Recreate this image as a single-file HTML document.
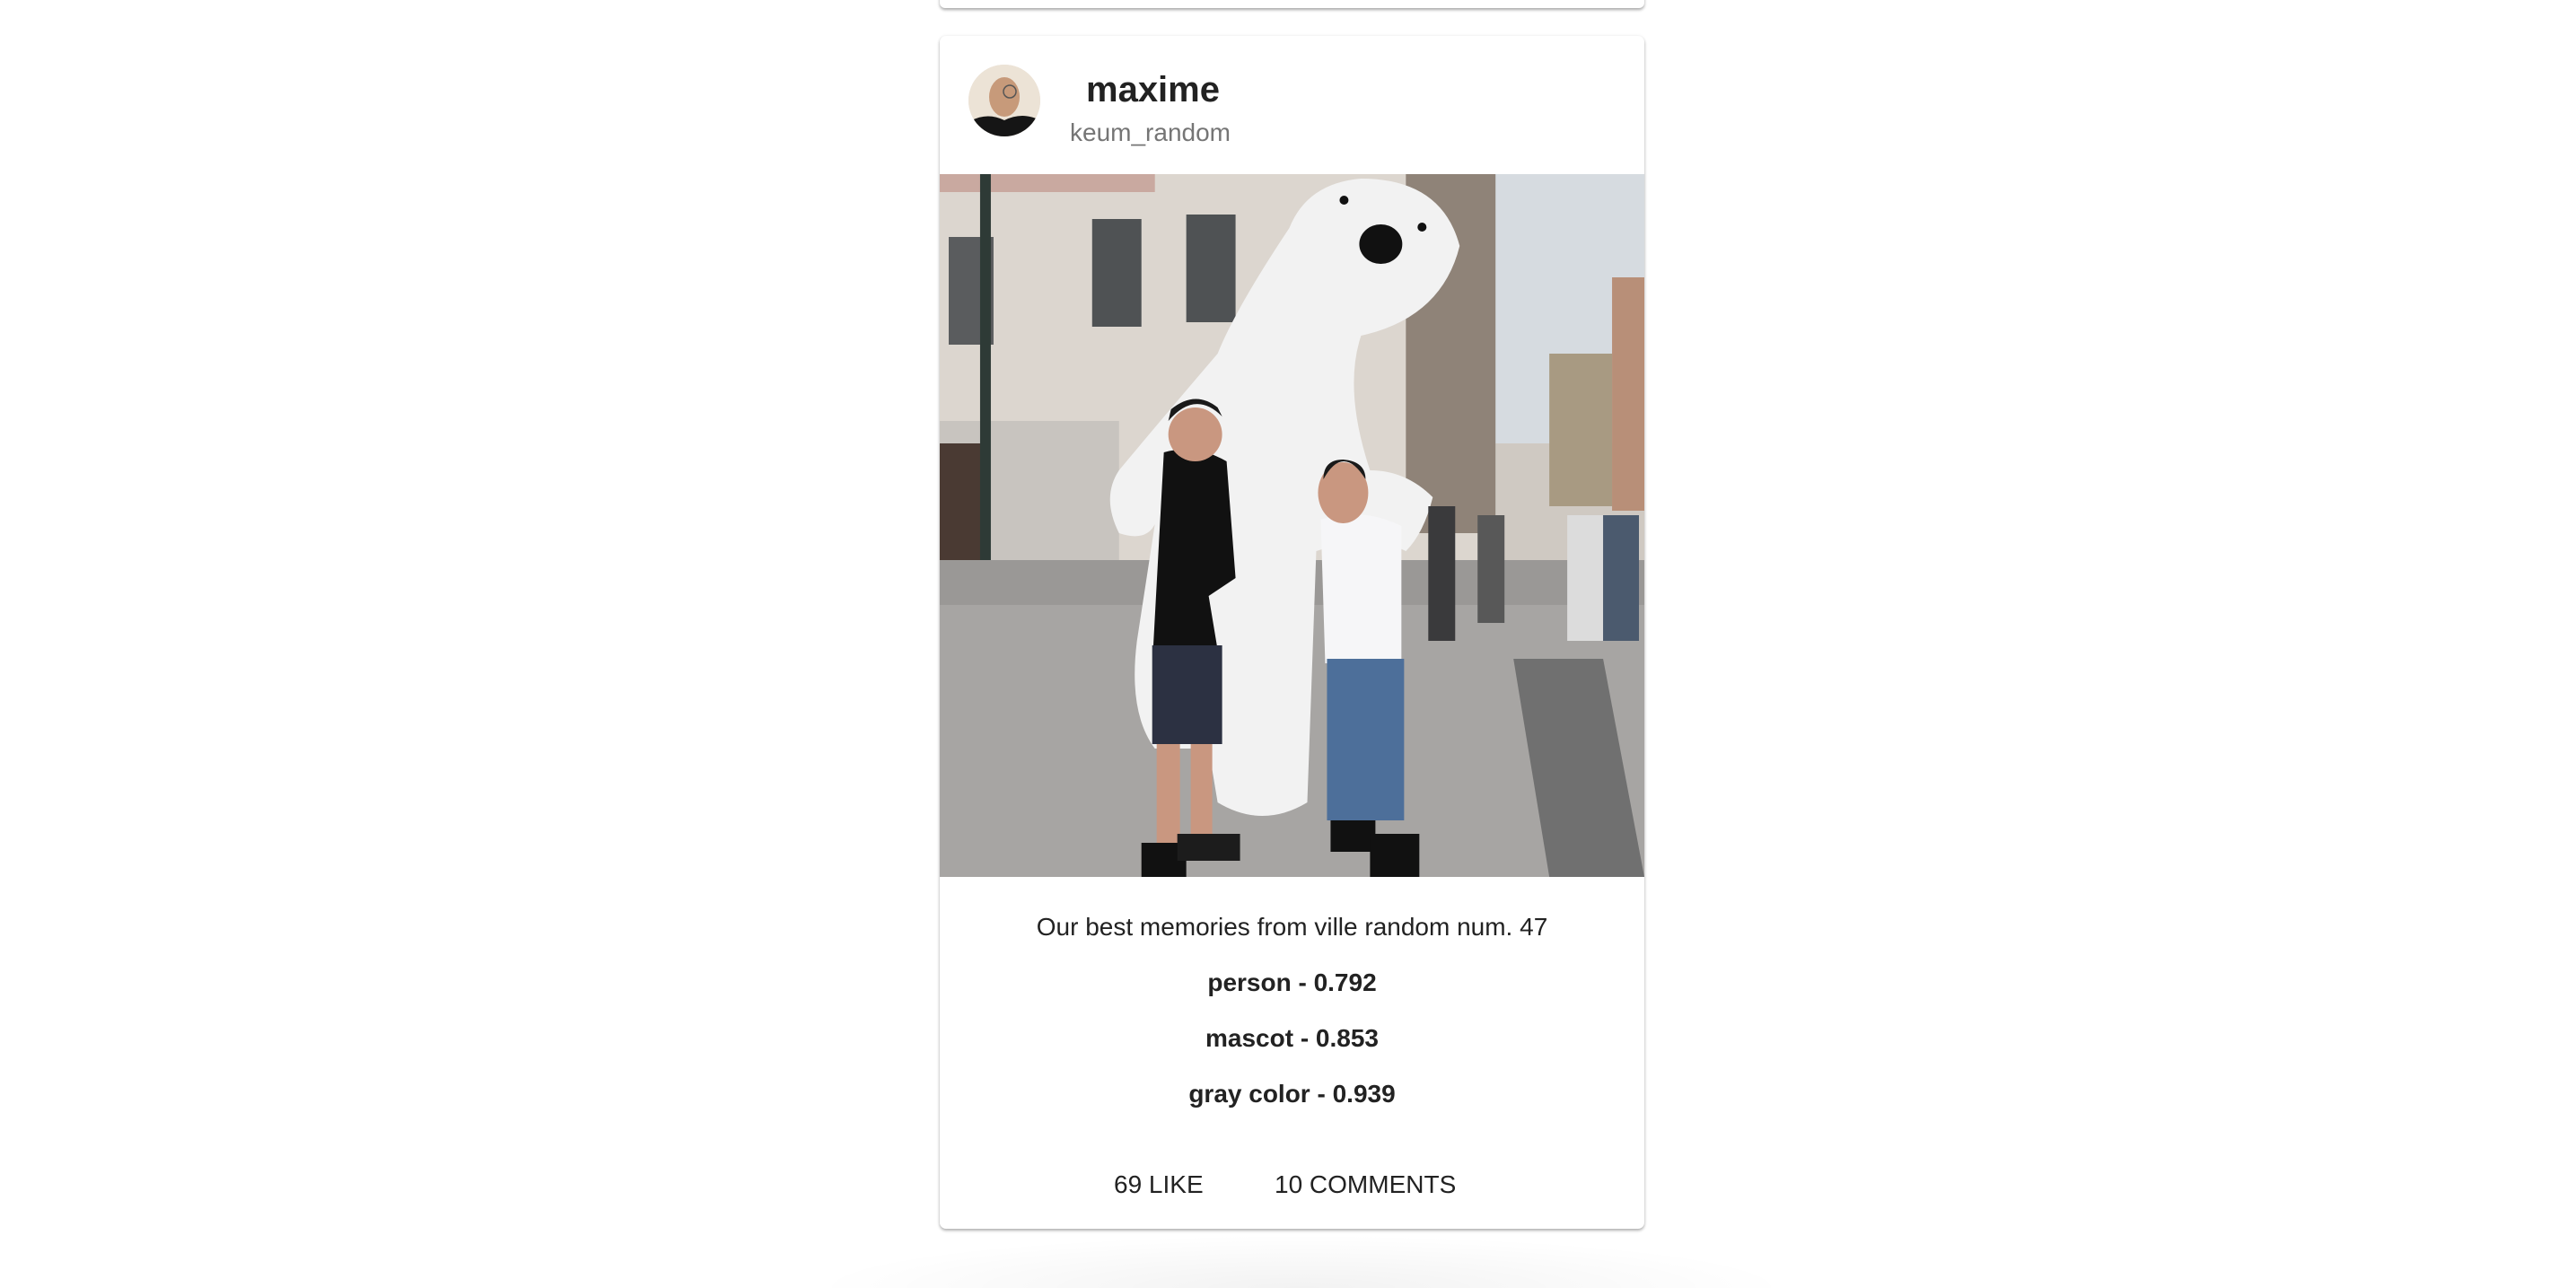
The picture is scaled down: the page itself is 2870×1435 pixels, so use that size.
<!DOCTYPE html>
<html><head><meta charset="utf-8"><style>
html,body{margin:0;padding:0;background:#fff;width:2870px;height:1410px;overflow:hidden;font-family:"Liberation Sans",Arial,sans-serif;color:#222}
.prev{position:absolute;left:1047px;top:-20px;width:785px;height:29px;background:#fff;border-radius:6px;box-shadow:0 2px 3px rgba(0,0,0,.35)}
.card{position:absolute;left:1047px;top:40px;width:785px;height:1329px;background:#fff;border-radius:7px;box-shadow:0 2px 3px rgba(0,0,0,.3),0 0 4px rgba(0,0,0,.06);overflow:hidden}
.av{position:absolute;left:32px;top:32px;width:80px;height:80px;border-radius:50%;overflow:hidden;background:#e8ddd0}
.name{position:absolute;left:163px;top:38px;font-size:40px;font-weight:bold;color:#222}
.user{position:absolute;left:145px;top:92px;font-size:28px;color:#757575}
.img{position:absolute;left:0;top:154px;width:785px;height:783px}
.t{position:absolute;left:0;width:785px;text-align:center}
.bottom{position:absolute;left:900px;top:1375px;width:1100px;height:60px;background:radial-gradient(ellipse at 50% 100%,rgba(0,0,0,.05),rgba(0,0,0,0) 70%)}
</style></head><body>
<div class="bottom"></div>
<div class="prev"></div>
<div class="card">
 <div class="av"><svg width="80" height="80" viewBox="0 0 80 80"><rect width="80" height="80" fill="#ece3d6"/><ellipse cx="40" cy="36" rx="17" ry="22" fill="#c79a7a"/><path d="M0 80 L0 64 Q20 52 40 62 Q60 52 80 62 L80 80Z" fill="#151515"/><circle cx="46" cy="30" r="7" fill="none" stroke="#555" stroke-width="1.5"/></svg></div>
 <div class="name">maxime</div>
 <div class="user">keum_random</div>
 <svg class="img" viewBox="0 0 786 783" preserveAspectRatio="none">
  <rect width="786" height="783" fill="#cfc9c2"/>
  <rect x="0" y="0" width="620" height="440" fill="#dcd6cf"/>
  <rect x="615" y="0" width="171" height="300" fill="#d6dbe0"/>
  <rect x="680" y="200" width="70" height="170" fill="#a89a82"/>
  <rect x="750" y="115" width="36" height="260" fill="#b88f78"/>
  <rect x="520" y="0" width="100" height="400" fill="#8f8378"/>
  <rect x="10" y="70" width="50" height="120" fill="#5a5c5e"/><rect x="170" y="50" width="55" height="120" fill="#4f5254"/><rect x="275" y="45" width="55" height="120" fill="#4f5254"/>
  <rect x="0" y="0" width="240" height="20" fill="#c9a9a0"/>
  <rect x="0" y="275" width="200" height="175" fill="#c8c4bf"/>
  <rect x="0" y="300" width="50" height="130" fill="#4a3a33"/>
  <rect x="45" y="0" width="12" height="490" fill="#2e3a36"/>
  <rect x="0" y="430" width="786" height="353" fill="#9a9896"/>
  <rect x="0" y="480" width="786" height="303" fill="#a7a5a3"/>
  <polygon points="640,540 740,540 786,783 680,783" fill="#707070"/>
  <path d="M200 330 Q180 360 200 400 Q230 410 240 390 L220 520 Q210 600 240 640 L300 640 L310 700 Q360 730 410 700 L420 420 Q480 400 520 420 Q540 400 550 360 Q520 330 480 330 Q450 240 470 180 Q560 160 580 80 Q560 5 470 5 Q410 10 390 60 Q330 150 310 200 Q250 270 200 330Z" fill="#f2f2f2"/>
  <ellipse cx="492" cy="78" rx="24" ry="22" fill="#111"/>
  <circle cx="451" cy="29" r="5" fill="#111"/><circle cx="538" cy="59" r="5" fill="#111"/>
  <path d="M250 310 Q285 300 320 320 L330 450 L300 470 L310 530 L238 530 Z" fill="#111"/>
  <rect x="237" y="525" width="78" height="110" fill="#2c3142"/>
  <rect x="242" y="635" width="26" height="110" fill="#c99780"/><rect x="280" y="635" width="24" height="100" fill="#c99780"/>
  <rect x="225" y="745" width="50" height="38" fill="#111"/><rect x="265" y="735" width="70" height="30" fill="#1c1c1c"/>
  <circle cx="285" cy="290" r="30" fill="#c99780"/><path d="M255 275 Q285 240 315 270 L310 260 Q285 240 258 262Z" fill="#1a1a1a"/>
  <path d="M425 385 Q470 370 515 392 L515 545 L430 545 Z" fill="#f6f6f8"/>
  <rect x="432" y="540" width="86" height="180" fill="#4d6f9a"/>
  <rect x="436" y="720" width="50" height="35" fill="#111"/><rect x="480" y="735" width="55" height="48" fill="#111"/>
  <ellipse cx="450" cy="355" rx="28" ry="34" fill="#c99780"/><path d="M428 340 Q450 300 475 340 Q475 320 450 318 Q428 318 428 340Z" fill="#1a1a1a"/>
  <rect x="545" y="370" width="30" height="150" fill="#3a3a3c"/><rect x="600" y="380" width="30" height="120" fill="#585858"/><rect x="700" y="380" width="40" height="140" fill="#dcdcdc"/><rect x="740" y="380" width="40" height="140" fill="#4b5a6e"/>
 </svg>
 <div class="t" style="top:977px;font-size:28px">Our best memories from ville random num. 47</div>
 <div class="t" style="top:1039px;font-size:28px;font-weight:bold">person - 0.792</div>
 <div class="t" style="top:1101px;font-size:28px;font-weight:bold">mascot - 0.853</div>
 <div class="t" style="top:1163px;font-size:28px;font-weight:bold">gray color - 0.939</div>
 <div style="position:absolute;left:194px;top:1264px;font-size:28px">69 LIKE</div>
 <div style="position:absolute;left:373px;top:1264px;font-size:28px">10 COMMENTS</div>
</div>
</body></html>
